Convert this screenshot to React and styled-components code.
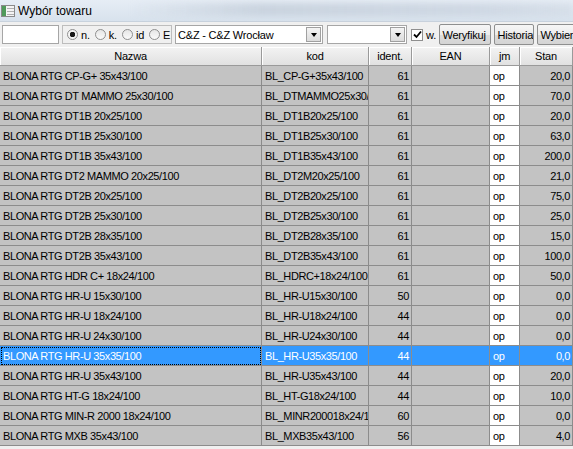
import React from "react";
import styled, { createGlobalStyle } from "styled-components";

const GlobalStyle = createGlobalStyle`
  html, body {
    margin: 0;
    padding: 0;
    background: #f0f0f0;
    overflow: hidden;
  }
`;

// kolumny siatki towarów
const columns = [
  { title: "Nazwa", width: 262 },
  { title: "kod", width: 107 },
  { title: "ident.", width: 43 },
  { title: "EAN", width: 78 },
  { title: "jm", width: 30 },
  { title: "Stan", width: 53 },
];
const gridCols = columns.map((c) => `${c.width}px`).join(" ");

const items = [
  ["BLONA RTG CP-G+ 35x43/100", "BL_CP-G+35x43/100", 61, "20,0"],
  ["BLONA RTG DT MAMMO 25x30/100", "BL_DTMAMMO25x30/100", 61, "70,0"],
  ["BLONA RTG DT1B 20x25/100", "BL_DT1B20x25/100", 61, "20,0"],
  ["BLONA RTG DT1B 25x30/100", "BL_DT1B25x30/100", 61, "63,0"],
  ["BLONA RTG DT1B 35x43/100", "BL_DT1B35x43/100", 61, "200,0"],
  ["BLONA RTG DT2 MAMMO 20x25/100", "BL_DT2M20x25/100", 61, "21,0"],
  ["BLONA RTG DT2B 20x25/100", "BL_DT2B20x25/100", 61, "75,0"],
  ["BLONA RTG DT2B 25x30/100", "BL_DT2B25x30/100", 61, "25,0"],
  ["BLONA RTG DT2B 28x35/100", "BL_DT2B28x35/100", 61, "15,0"],
  ["BLONA RTG DT2B 35x43/100", "BL_DT2B35x43/100", 61, "100,0"],
  ["BLONA RTG HDR C+ 18x24/100", "BL_HDRC+18x24/100", 61, "50,0"],
  ["BLONA RTG HR-U 15x30/100", "BL_HR-U15x30/100", 50, "0,0"],
  ["BLONA RTG HR-U 18x24/100", "BL_HR-U18x24/100", 44, "0,0"],
  ["BLONA RTG HR-U 24x30/100", "BL_HR-U24x30/100", 44, "0,0"],
  ["BLONA RTG HR-U 35x35/100", "BL_HR-U35x35/100", 44, "0,0"],
  ["BLONA RTG HR-U 35x43/100", "BL_HR-U35x43/100", 44, "20,0"],
  ["BLONA RTG HT-G 18x24/100", "BL_HT-G18x24/100", 44, "10,0"],
  ["BLONA RTG MIN-R 2000 18x24/100", "BL_MINR200018x24/100", 60, "0,0"],
  ["BLONA RTG MXB 35x43/100", "BL_MXB35x43/100", 56, "4,0"],
];

const selectedRow = 14;

const WindowIcon = () => (
  <svg width="14" height="12" viewBox="0 0 14 12">
    <rect x="0.5" y="0.5" width="13" height="11" fill="#f4f4f4" stroke="#8a8a8a" />
    <rect x="1" y="1" width="4" height="10" fill="#4f9a5a" />
    <rect x="6" y="3" width="7" height="1" fill="#b0b0b0" />
    <rect x="6" y="6" width="7" height="1" fill="#b0b0b0" />
    <rect x="6" y="9" width="7" height="1" fill="#b0b0b0" />
  </svg>
);

const CheckMark = () => (
  <svg width="9" height="9" viewBox="0 0 9 9">
    <path d="M1 4.5 L3.5 7 L8 1.5" fill="none" stroke="#000" strokeWidth="1.8" />
  </svg>
);

const App = () => {
  return (
    <>
      <GlobalStyle />
      <Window>
        <TitleBar>
          <WindowIcon />
          <Title>Wybór towaru</Title>
          <TitleHaze />
        </TitleBar>

        <Toolbar>
          <TextBox />
          <RadioGroup>
            {["n.", "k.", "id", "E"].map((label, i) => (
              <RadioItem key={label}>
                <Radio $checked={i === 0} />
                <span>{label}</span>
              </RadioItem>
            ))}
          </RadioGroup>
          <Combo $width={148}>
            <ComboText>C&amp;Z - C&amp;Z Wrocław</ComboText>
            <DropButton>
              <Arrow />
            </DropButton>
          </Combo>
          <Combo $width={80} $gap={1}>
            <ComboText />
            <DropButton>
              <Arrow />
            </DropButton>
          </Combo>
          <CheckItem>
            <CheckBox>
              <CheckMark />
            </CheckBox>
            <span>w.</span>
          </CheckItem>
          <Button $width={52}>Weryfikuj</Button>
          <Button $width={40}>Historia</Button>
          <Button $width={52}>Wybierz</Button>
        </Toolbar>

        <Grid>
          <HeaderRow>
            {columns.map((c) => (
              <HeaderCell key={c.title}>{c.title}</HeaderCell>
            ))}
          </HeaderRow>
          {items.map(([name, code, ident, stock], i) => {
            const sel = i === selectedRow;
            return (
              <Row key={name} $selected={sel}>
                <Cell $focus={sel}>{name}</Cell>
                <Cell>{code}</Cell>
                <Cell $align="right">{ident}</Cell>
                <Cell />
                <Cell $white={!sel}>op</Cell>
                <Cell $align="right">{stock}</Cell>
              </Row>
            );
          })}
        </Grid>
      </Window>
    </>
  );
};

const Window = styled.div`
  width: 573px;
  height: 449px;
  display: flex;
  flex-direction: column;
  overflow: hidden;
  background: #f0f0f0;
  font-family: "Liberation Sans", Arial, sans-serif;
`;

const TitleBar = styled.div`
  position: relative;
  height: 21px;
  display: flex;
  align-items: center;
  gap: 3px;
  padding-left: 1px;
  background: linear-gradient(#e6edf5, #d8e2ed);
  border-bottom: 1px solid #c8d2dd;
  flex-shrink: 0;
`;

const Title = styled.span`
  position: relative;
  z-index: 1;
  font-size: 12px;
  color: #000;
`;

// rozmyte tło szklanej belki tytułowej
const TitleHaze = styled.div`
  position: absolute;
  left: 130px;
  right: 0;
  top: 3px;
  height: 13px;
  background: linear-gradient(90deg, rgba(190, 200, 212, 0), rgba(184, 195, 208, 0.55) 30%, rgba(188, 198, 212, 0.45) 80%, rgba(190, 200, 212, 0.25));
  filter: blur(3px);
`;

const Toolbar = styled.div`
  height: 25px;
  display: flex;
  align-items: center;
  padding: 0 2px;
  gap: 3px;
  font-size: 11px;
  flex-shrink: 0;
  overflow: hidden;

  & > * {
    flex-shrink: 0;
  }
`;

const TextBox = styled.div`
  width: 57px;
  height: 19px;
  background: #fff;
  border: 1px solid #a6a6a6;
  box-sizing: border-box;
`;

const RadioGroup = styled.div`
  width: 110px;
  height: 19px;
  box-sizing: border-box;
  border: 1px solid #bdbdbd;
  display: flex;
  align-items: center;
  padding-left: 4px;
  gap: 5px;
`;

const RadioItem = styled.label`
  display: flex;
  align-items: center;
  gap: 3px;
  letter-spacing: -0.2px;
`;

const Radio = styled.span`
  width: 11px;
  height: 11px;
  box-sizing: border-box;
  border-radius: 50%;
  border: 1px solid #8f8f8f;
  background: ${(p) =>
    p.$checked
      ? "radial-gradient(circle, #1a1a1a 0 2.5px, #f5f5f5 3px)"
      : "linear-gradient(#e6e6e6, #fafafa)"};
`;

const Combo = styled.div`
  width: ${(p) => p.$width}px;
  height: 19px;
  box-sizing: border-box;
  border: 1px solid #a6a6a6;
  background: #fff;
  display: flex;
  align-items: center;
  margin-left: ${(p) => p.$gap || 0}px;
`;

const ComboText = styled.span`
  flex: 1;
  padding-left: 2px;
  letter-spacing: -0.2px;
  white-space: nowrap;
  overflow: hidden;
`;

const DropButton = styled.span`
  width: 15px;
  height: 15px;
  margin-right: 1px;
  box-sizing: border-box;
  border: 1px solid #a0a0a0;
  background: linear-gradient(#f4f4f4, #dcdcdc);
  display: flex;
  align-items: center;
  justify-content: center;
`;

const Arrow = styled.span`
  width: 0;
  height: 0;
  border-left: 3.5px solid transparent;
  border-right: 3.5px solid transparent;
  border-top: 4px solid #000;
`;

const CheckItem = styled.label`
  display: flex;
  align-items: center;
  gap: 3px;
  margin-left: 1px;
`;

const CheckBox = styled.span`
  width: 12px;
  height: 12px;
  box-sizing: border-box;
  border: 1px solid #8f8f8f;
  background: #fff;
  display: flex;
  align-items: center;
  justify-content: center;
`;

const Button = styled.button`
  width: ${(p) => p.$width}px;
  height: 21px;
  padding: 0 0 0 2px;
  border: 1px solid #8e8f8f;
  border-radius: 2px;
  background: linear-gradient(#f6f6f6 0%, #ececec 50%, #dcdcdc 51%, #d4d4d4 100%);
  font-family: "Liberation Sans", Arial, sans-serif;
  font-size: 11px;
  letter-spacing: -0.2px;
  color: #000;
  white-space: nowrap;
  overflow: hidden;
  text-align: left;
`;

const Grid = styled.div`
  flex: 1;
  display: flex;
  flex-direction: column;
  font-size: 11px;
  letter-spacing: -0.4px;
`;

const HeaderRow = styled.div`
  display: grid;
  grid-template-columns: ${gridCols};
  height: 19px;
  flex-shrink: 0;
`;

const HeaderCell = styled.div`
  box-sizing: border-box;
  border-right: 1px solid #9a9a9a;
  border-bottom: 1px solid #9a9a9a;
  box-shadow: inset 1px 1px 0 #fff;
  background: linear-gradient(#f3f3f3, #e1e1e1);
  display: flex;
  align-items: center;
  justify-content: center;
  letter-spacing: -0.2px;
`;

const Row = styled.div`
  display: grid;
  grid-template-columns: ${gridCols};
  height: 20px;
  flex-shrink: 0;
  background: ${(p) => (p.$selected ? "#3399ff" : "#c3c3c3")};
  color: ${(p) => (p.$selected ? "#fff" : "#000")};
`;

const Cell = styled.div`
  box-sizing: border-box;
  border-right: 1px solid #8c8c8c;
  border-bottom: 1px solid #8c8c8c;
  background: ${(p) => (p.$white ? "#fff" : "transparent")};
  color: inherit;
  display: flex;
  align-items: center;
  justify-content: ${(p) => (p.$align === "right" ? "flex-end" : "flex-start")};
  padding: 0 2px 0 3px;
  white-space: nowrap;
  overflow: hidden;
  outline: ${(p) => (p.$focus ? "1px dotted #000" : "none")};
  outline-offset: -2px;
`;

export default App;
